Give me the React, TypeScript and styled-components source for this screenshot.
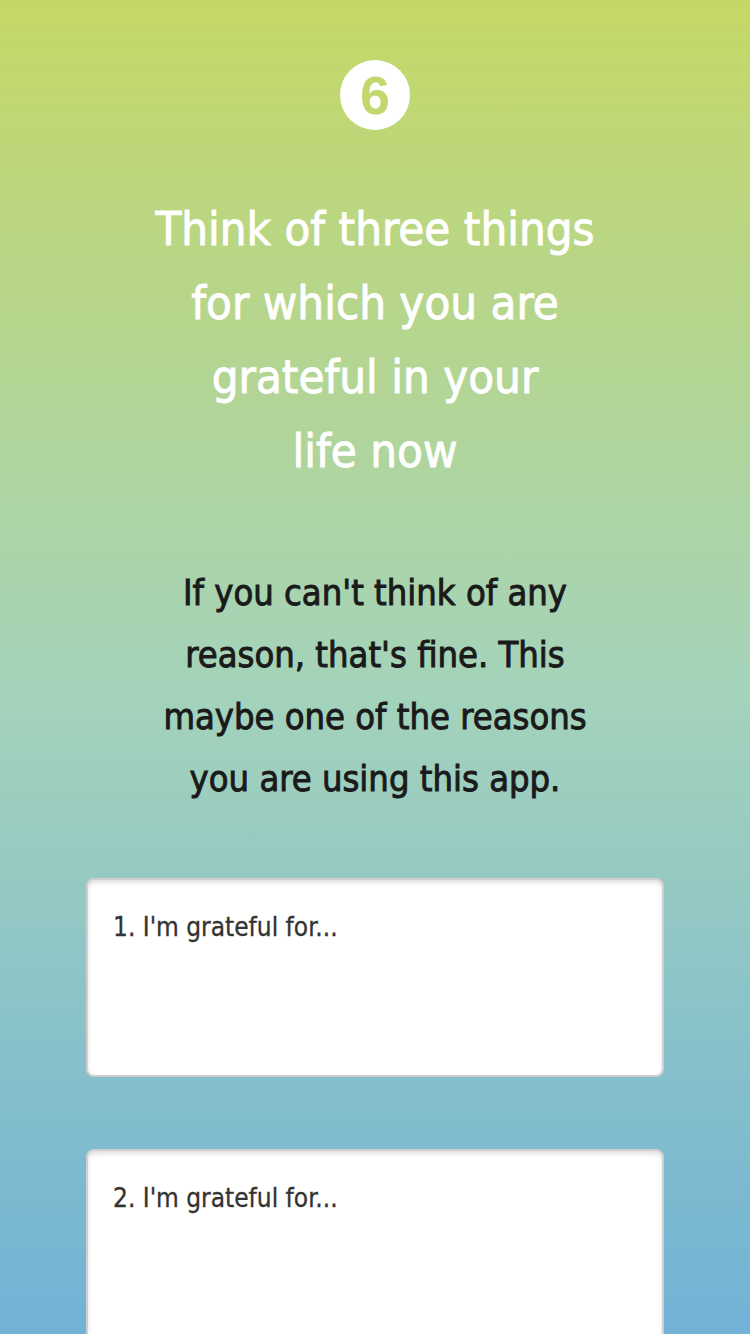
import styled, { createGlobalStyle } from "styled-components";

const Global = createGlobalStyle`
  html, body {
    margin: 0;
    padding: 0;
  }
  body {
    font-family: "DejaVu Sans Condensed", "DejaVu Sans", sans-serif;
  }
`;

const Screen = styled.div`
  width: 750px;
  height: 1334px;
  overflow: hidden;
  display: flex;
  flex-direction: column;
  align-items: center;
  background: linear-gradient(180deg, #c5d866 0%, #a4d3bb 52%, #71b2d6 100%);

  & > * {
    flex-shrink: 0;
  }
`;

const StepBadge = styled.div`
  margin-top: 60px;
  width: 70px;
  height: 70px;
  border-radius: 50%;
  background: #ffffff;
  display: flex;
  align-items: center;
  justify-content: center;
  font-family: "Liberation Sans", Arial, sans-serif;
  font-weight: 700;
  font-size: 54px;
  color: #c3d86c;
  line-height: 1;
`;

const Title = styled.h1`
  margin: 62px 0 0;
  color: #ffffff;
  font-weight: 400;
  font-size: 47px;
  line-height: 74px;
  text-align: center;
  -webkit-text-stroke: 0.9px #ffffff;
`;

const Note = styled.p`
  margin: 74px 0 0;
  color: #1a1a1a;
  font-weight: 400;
  font-size: 36px;
  line-height: 62px;
  text-align: center;
  -webkit-text-stroke: 0.9px #1a1a1a;
`;

const Entries = styled.div`
  margin-top: 68px;
  display: flex;
  flex-direction: column;
  gap: 72px;
`;

const Entry = styled.div`
  box-sizing: border-box;
  flex-shrink: 0;
  width: 578px;
  height: 199px;
  background: #ffffff;
  border: 2px solid #cfcfcf;
  border-radius: 8px;
  box-shadow: inset 0 3px 4px rgba(0, 0, 0, 0.12);
  padding: 32px 25px;
  color: #333333;
  font-size: 26px;
  -webkit-text-stroke: 0.3px #333333;
`;

export default function App() {
  return (
    <>
      <Global />
      <Screen>
        <StepBadge>6</StepBadge>
        <Title>
          Think of three things
          <br />
          for which you are
          <br />
          grateful in your
          <br />
          life now
        </Title>
        <Note>
          If you can't think of any
          <br />
          reason, that's fine. This
          <br />
          maybe one of the reasons
          <br />
          you are using this app.
        </Note>
        <Entries>
          <Entry>1. I'm grateful for...</Entry>
          <Entry>2. I'm grateful for...</Entry>
        </Entries>
      </Screen>
    </>
  );
}
